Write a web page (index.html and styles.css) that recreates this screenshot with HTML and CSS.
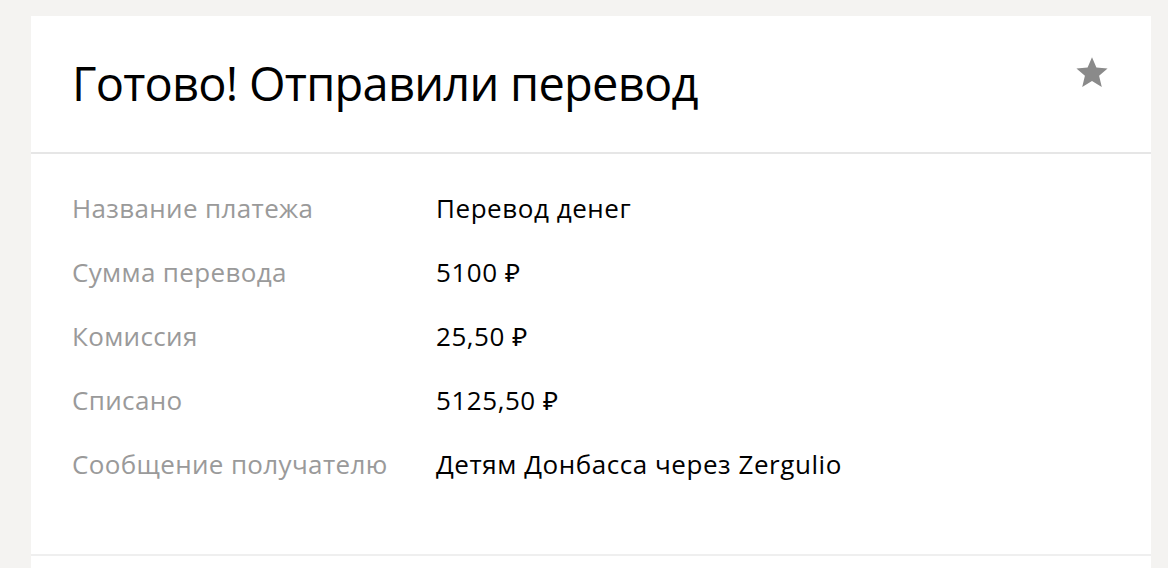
FILE: index.html
```html
<!DOCTYPE html>
<html lang="ru">
<head>
<meta charset="utf-8">
<link rel="stylesheet" href="styles.css">
</head>
<body>
<div class="page">
  <div class="card">
    <div class="card-head">
      <h1 class="title">Готово! Отправили перевод</h1>
      <svg class="star" viewBox="0 0 24 24" width="34" height="34"><path d="M12 1.5l3.1 7.4 7.9.6-6 5.2 1.9 7.8L12 18.3l-6.9 4.2 1.9-7.8-6-5.2 7.9-.6z" fill="#8a8a8a"/></svg>
    </div>
    <div class="card-body">
      <div class="row"><div class="label">Название платежа</div><div class="value">Перевод денег</div></div>
      <div class="row"><div class="label">Сумма перевода</div><div class="value">5100 ₽</div></div>
      <div class="row"><div class="label">Комиссия</div><div class="value">25,50 ₽</div></div>
      <div class="row"><div class="label">Списано</div><div class="value">5125,50 ₽</div></div>
      <div class="row"><div class="label">Сообщение получателю</div><div class="value">Детям Донбасса через Zergulio</div></div>
    </div>
    <div class="card-foot"></div>
  </div>
</div>
</body>
</html>
```
FILE: styles.css
```css
html, body {
  margin: 0;
  padding: 0;
  background: #f4f3f1;
  font-family: "Open Sans", "Noto Sans", sans-serif;
  color: #000;
}
.page {
  padding: 16px 17px 0 31px;
  height: 568px;
  box-sizing: border-box;
  overflow: hidden;
}
.card {
  width: 1120px;
  background: #fff;
}
.card-head {
  height: 138px;
  border-bottom: 2px solid #e6e6e6;
  box-sizing: border-box;
  display: flex;
  justify-content: space-between;
  align-items: flex-start;
  padding: 0 24px 0 41px;
}
.title {
  margin: 0;
  padding-top: 37px;
  font-size: 47px;
  font-weight: 400;
  line-height: 60px;
  letter-spacing: -0.75px;
}
.star {
  margin-top: 39px;
  margin-right: 18px;
}
.card-body {
  padding: 38px 41px 0;
  height: 402px;
  box-sizing: border-box;
  border-bottom: 2px solid #efefef;
}
.row {
  display: flex;
  height: 64px;
  align-items: flex-start;
  font-size: 26px;
  line-height: 32px;
}
.label {
  width: 364px;
  flex: none;
  color: #9a9a9a;
  letter-spacing: 0.35px;
}
.value {
  color: #000;
  letter-spacing: 0.55px;
}
.card-foot {
  height: 20px;
}
```
